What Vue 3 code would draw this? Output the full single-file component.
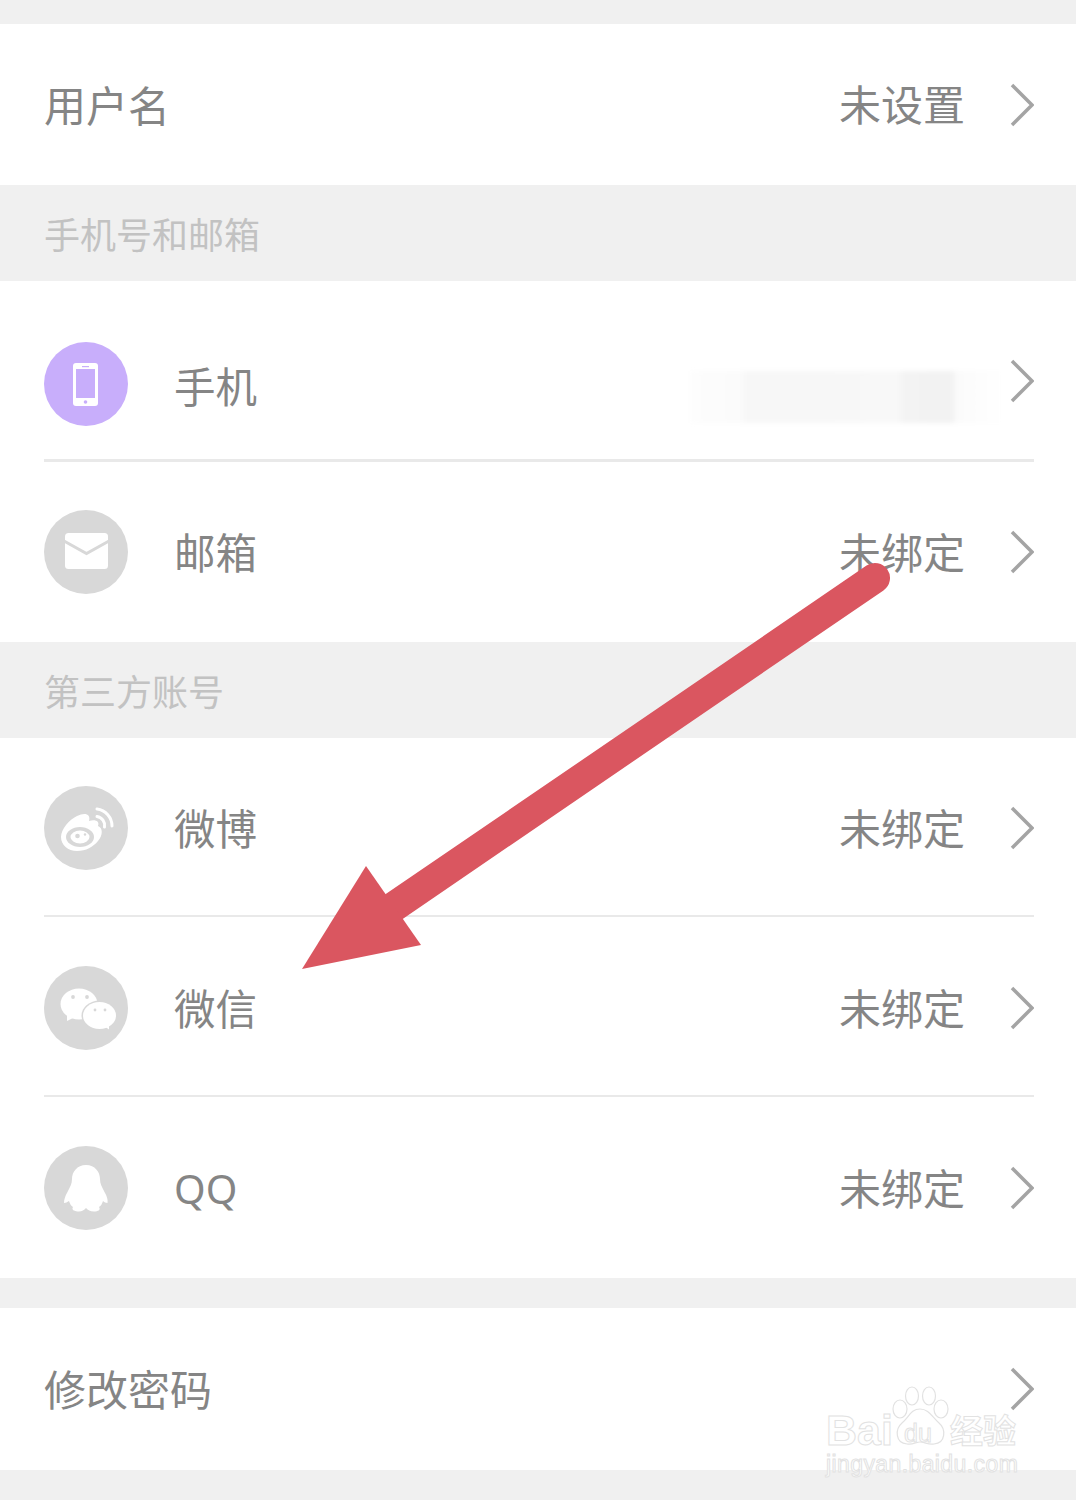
<script setup>
const thirdParty = [
  { name: '微博', icon: 'weibo', cls: 'row-weibo' },
  { name: '微信', icon: 'wechat', cls: 'row-wechat' },
  { name: 'QQ', icon: 'qq', cls: 'row-qq' },
]
</script>

<template>
  <div class="page">
    <section class="card card-top">
      <div class="row row-simple">
        <span class="label plain">用户名</span>
        <span class="value">未设置</span>
        <svg class="chevron" viewBox="0 0 24 44"><path d="M2 2 L22 22 L2 42" /></svg>
      </div>
    </section>

    <div class="group-title">手机号和邮箱</div>

    <section class="card">
      <div class="row row-phone">
        <svg class="avatar" viewBox="0 0 84 84">
          <circle cx="42" cy="42" r="42" fill="#c8aefb" />
          <rect x="29" y="21" width="25" height="43" rx="3" fill="#fff" />
          <rect x="32" y="27" width="19" height="29" fill="#c8aefb" />
          <rect x="38" y="24" width="7" height="1.2" fill="#c8aefb" />
          <circle cx="41.5" cy="60" r="1.8" fill="#c8aefb" />
        </svg>
        <span class="label">手机</span>
        <div class="masked"></div>
        <svg class="chevron chevron-phone" viewBox="0 0 24 44"><path d="M2 2 L22 22 L2 42" /></svg>
      </div>
      <div class="divider divider-thick"></div>
      <div class="row row-mail">
        <svg class="avatar" viewBox="0 0 84 84">
          <circle cx="42" cy="42" r="42" fill="#d8d8d8" />
          <rect x="21" y="23" width="43" height="36" rx="3.5" fill="#fff" />
          <path d="M20 31 L42.5 43.5 L65 31" fill="none" stroke="#d8d8d8" stroke-width="3" />
        </svg>
        <span class="label">邮箱</span>
        <span class="value">未绑定</span>
        <svg class="chevron" viewBox="0 0 24 44"><path d="M2 2 L22 22 L2 42" /></svg>
      </div>
    </section>

    <div class="group-title">第三方账号</div>

    <section class="card">
      <template v-for="(item, i) in thirdParty" :key="item.icon">
        <div v-if="i > 0" class="divider"></div>
        <div class="row" :class="item.cls">
          <svg class="avatar" viewBox="0 0 84 84">
            <circle cx="42" cy="42" r="42" fill="#d8d8d8" />
            <g v-if="item.icon === 'weibo'">
              <path d="M17 51 C17 43 25 34 33 30 C41 26 47 28 45 35 C51 33 56 35 54 40 C59 42 59 49 54 55 C49 61 42 65 33 65 C24 65 17 59 17 51 Z" fill="#fff" />
              <ellipse cx="36" cy="51" rx="14" ry="10" fill="#d8d8d8" />
              <ellipse cx="36" cy="51" rx="9.5" ry="6.5" fill="#fff" />
              <circle cx="33.5" cy="50" r="2.3" fill="#d8d8d8" />
              <circle cx="41" cy="48.5" r="1.2" fill="#d8d8d8" />
              <path d="M53 23 A17 17 0 0 1 68 40" fill="none" stroke="#fff" stroke-width="3" stroke-linecap="round" />
              <path d="M53 30.5 A9 9 0 0 1 60.5 41" fill="none" stroke="#fff" stroke-width="3" stroke-linecap="round" />
            </g>
            <g v-else-if="item.icon === 'wechat'">
              <ellipse cx="35" cy="38" rx="18.5" ry="15.5" fill="#fff" />
              <path d="M23 48 L23 55 L31 51 Z" fill="#fff" />
              <circle cx="29" cy="31" r="1.9" fill="#d8d8d8" />
              <circle cx="43" cy="31" r="1.9" fill="#d8d8d8" />
              <ellipse cx="55.5" cy="49.5" rx="18" ry="15" fill="#d8d8d8" />
              <ellipse cx="55.5" cy="49.5" rx="16.5" ry="13.5" fill="#fff" />
              <path d="M60 60 L65 63.5 L65 56 Z" fill="#fff" />
              <circle cx="51" cy="44" r="1.4" fill="#d8d8d8" />
              <circle cx="61" cy="44" r="1.4" fill="#d8d8d8" />
            </g>
            <path
              v-else
              d="M42 19 C33 19 28 26 28 33 C28 38 26 41 23.5 46 C21 50 20 54 20 57 C22 57 23 56 25 55 C26 58 27 60 29 61 C27 64 31 65.5 35 65.5 C38 65.5 40 64 42 62 C44 64 46 65.5 50 65.5 C54 65.5 57 64 55 61 C57 60 58 58 59 55 C60 56 62 57 63.5 57 C64 54 63 50 60.5 46 C58 41 56 38 56 33 C56 26 51 19 42 19 Z"
              fill="#fff"
            />
          </svg>
          <span class="label" :class="{ latin: item.icon === 'qq' }">{{ item.name }}</span>
          <span class="value">未绑定</span>
          <svg class="chevron" viewBox="0 0 24 44"><path d="M2 2 L22 22 L2 42" /></svg>
        </div>
      </template>
    </section>

    <div class="gap"></div>

    <section class="card">
      <div class="row row-simple row-password">
        <span class="label plain">修改密码</span>
        <svg class="chevron chevron-end" viewBox="0 0 24 44"><path d="M2 2 L22 22 L2 42" /></svg>
      </div>
    </section>

    <!-- annotation drawn over the screenshot -->
    <svg class="arrow" viewBox="0 0 1076 1500">
      <path d="M875 578 L392 908" stroke="#da5660" stroke-width="30" stroke-linecap="round" fill="none" />
      <path d="M302 969 L366 866 L421 945 Z" fill="#da5660" />
    </svg>

    <div class="watermark">
      <svg class="paw" viewBox="0 0 62 62">
        <g fill="#fff" stroke="#e2e2e2" stroke-width="1.2">
          <ellipse cx="11" cy="24" rx="7" ry="9" />
          <ellipse cx="23" cy="11" rx="6.5" ry="9" />
          <ellipse cx="40" cy="11" rx="6.5" ry="9" />
          <ellipse cx="52" cy="24" rx="7" ry="9" />
          <path d="M31 24 C22 24 20 32 13 38 C6 44 6 58 18 59 C24 60 27 57 31 57 C36 57 39 60 45 59 C57 58 57 44 50 38 C43 32 40 24 31 24 Z" />
        </g>
      </svg>
      <span class="wm-bai">Bai</span>
      <span class="wm-du">du</span>
      <span class="wm-jy">经验</span>
      <span class="wm-url">jingyan.baidu.com</span>
    </div>
  </div>
</template>

<style scoped>
.page {
  position: relative;
  width: 1076px;
  height: 1500px;
  overflow: hidden;
  padding-top: 24px;
  box-sizing: border-box;
  background: #f0f0f0;
  font-family: "Noto Sans CJK SC", "Noto Sans", sans-serif;
  color: #858585;
}
.card {
  background: #fff;
}
.group-title {
  height: 96px;
  padding-left: 44px;
  padding-bottom: 1px;
  box-sizing: border-box;
  display: flex;
  align-items: center;
  font-size: 36px;
  color: #c2c2c2;
}
.gap {
  height: 30px;
}
.row {
  display: flex;
  align-items: center;
  box-sizing: border-box;
  padding: 0 42px 0 44px;
}
.row-simple {
  height: 161px;
}
.row-password {
  height: 162px;
}
.row-phone {
  height: 178px;
  padding-top: 28px;
}
.row-mail {
  height: 180px;
}
.row-weibo {
  height: 177px;
  padding-top: 3px;
}
.row-wechat {
  height: 178px;
  padding-top: 4px;
}
.row-qq {
  height: 181px;
}
.row-qq .value {
  margin-top: -1px;
}
.divider {
  height: 2px;
  margin: 0 42px 0 44px;
  background: #e9e9e9;
}
.divider-thick {
  height: 3px;
}
.avatar {
  width: 84px;
  height: 84px;
  flex: none;
}
.label {
  margin-left: 46px;
  font-size: 41.5px;
  line-height: 50px;
  margin-top: -2px;
}
.row-phone .label {
  margin-top: 2px;
}
.label.plain {
  margin-left: 0;
  font-size: 42px;
  margin-top: -2px;
}
.label.latin {
  font-family: "Noto Sans", sans-serif;
  font-size: 40.5px;
  margin-top: 2px;
}
.value {
  margin-left: auto;
  font-size: 42px;
  line-height: 50px;
  margin-top: -3px;
}
.chevron {
  width: 24px;
  height: 44px;
  margin-left: 45px;
  flex: none;
  fill: none;
  stroke: #a4a4a4;
  stroke-width: 3.5;
}
.chevron-end {
  margin-left: auto;
}
.chevron-phone {
  margin-left: 5px;
  margin-top: -6px;
}
.masked {
  margin-left: auto;
  margin-top: 26px;
  width: 315px;
  height: 52px;
  background: linear-gradient(90deg, #fdfdfd 0%, #fbfbfb 16%, #f7f7f7 18%, #f8f8f8 66%, #f3f3f3 68%, #f2f2f2 83%, #fbfbfb 85%, #ffffff 100%);
  filter: blur(2px);
}
.arrow {
  position: absolute;
  left: 0;
  top: 0;
  width: 1076px;
  height: 1500px;
}
.watermark {
  position: absolute;
  left: 826px;
  top: 1385px;
  width: 196px;
  height: 96px;
  font-family: "Liberation Sans", sans-serif;
  color: #fff;
  -webkit-text-stroke: 1px #e2e2e2;
}
.watermark span {
  position: absolute;
  white-space: nowrap;
}
.paw {
  position: absolute;
  left: 63px;
  top: 0;
  width: 62px;
  height: 62px;
}
.wm-bai {
  left: 0;
  top: 21px;
  font-size: 43px;
  line-height: 48px;
  font-weight: 700;
}
.wm-du {
  left: 78px;
  top: 33px;
  font-size: 25px;
  line-height: 30px;
}
.wm-jy {
  left: 124px;
  top: 22px;
  font-family: "Noto Sans CJK SC", sans-serif;
  font-size: 33px;
  line-height: 44px;
  font-weight: 700;
}
.wm-url {
  left: 0;
  top: 65px;
  font-size: 23px;
  line-height: 28px;
  letter-spacing: 0.4px;
}
</style>
